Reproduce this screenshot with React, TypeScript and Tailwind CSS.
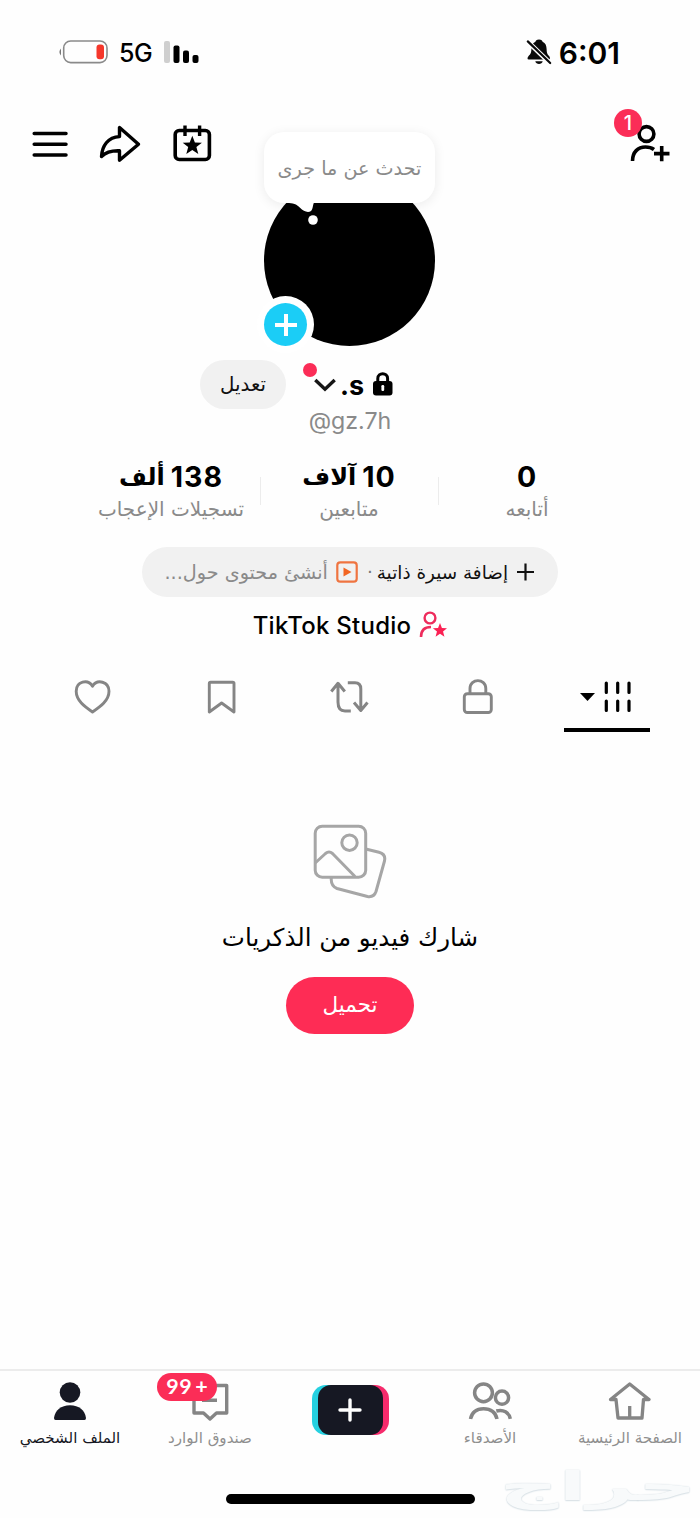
import type { ReactNode } from "react";

const AR = "font-['DejaVu_Sans',sans-serif]";

const STAR =
  "M0 -10 L2.6 -3.3 L9.6 -3 L4.1 1.4 L6 8.3 L0 4.4 L-6 8.3 L-4.1 1.4 L-9.6 -3 L-2.6 -3.3 Z";

function StatusBar() {
  return (
    <div className="flex h-[104px] items-center justify-between pl-[58px] pr-[80px]">
      <div className="flex items-center">
        <svg width="50" height="24" viewBox="0 0 50 24" className="block">
          <path d="M3 8.4 Q-0.2 12 3 15.6 Z" fill="#777" />
          <rect x="5.7" y="1" width="43.3" height="21.6" rx="7" fill="none" stroke="#8a8a8a" strokeWidth="1.6" />
          <rect x="38.5" y="4.6" width="7.5" height="14.6" rx="3" fill="#f5372b" />
        </svg>
        <span className="ml-[11px] pt-[3px] font-['Inter',sans-serif] text-[25px] leading-none font-medium tracking-[-0.5px]">5G</span>
        <svg width="38" height="24" viewBox="0 0 38 24" className="ml-[11px] block">
          <rect x="1" y="1" width="6" height="22" rx="2" fill="#cfcfcf" />
          <rect x="10.5" y="5.5" width="6" height="17.5" rx="2" fill="#000" />
          <rect x="20" y="10.5" width="6" height="12.5" rx="2" fill="#000" />
          <rect x="29.5" y="15" width="6" height="8" rx="2" fill="#000" />
        </svg>
      </div>
      <div className="flex items-center">
        <svg width="26" height="28" viewBox="0 0 26 28" className="block">
          <path d="M13 1.5 C10.5 1.5 9.7 3 9.4 3.8 C6.5 5 5.5 7.8 5.4 11 C5.3 15 4.5 16 2.6 18 C1.2 19.5 1 21.5 2.8 21.5 H22.4 C24.5 21.5 24.3 19.5 23 18 C21.3 16 20.7 15 20.6 11 C20.5 7.8 19.5 5 16.6 3.8 C16.3 3 15.5 1.5 13 1.5 Z" fill="#0a0a0a" />
          <path d="M9.3 23.3 H16.7 C16 27 10 27 9.3 23.3 Z" fill="#0a0a0a" />
          <path d="M1 3 L25 26" stroke="#fff" strokeWidth="4.8" />
          <path d="M1.8 3.4 L24.2 25" stroke="#0a0a0a" strokeWidth="2.2" strokeLinecap="round" />
        </svg>
        <span className="ml-[7px] pt-[2px] font-['Inter',sans-serif] text-[30px] leading-none font-semibold">6:01</span>
      </div>
    </div>
  );
}

function HeaderIcons() {
  return (
    <div className="flex w-[180px] items-center justify-between pt-[20px]">
      <svg width="36" height="40" viewBox="0 0 36 40" fill="none" stroke="#000" strokeWidth="3.5" strokeLinecap="round">
        <path d="M2.2 9.5 H34 M2.2 20.3 H34 M2.2 31 H34" />
      </svg>
      <svg width="42" height="40" viewBox="0 0 42 40" fill="none" stroke="#000" strokeWidth="3.4" strokeLinejoin="round">
        <path d="M20.5 3.5 V12.6 C9 13 3 22 2.5 32.5 C7.5 27.5 13 26.5 20.5 26.8 V36.3 L39.5 20.2 Z" />
      </svg>
      <svg width="40" height="40" viewBox="0 0 40 40">
        <rect x="3.2" y="6.5" width="34.2" height="29" rx="4" fill="none" stroke="#000" strokeWidth="3.6" />
        <path d="M13 1.5 V12 M27.6 1.5 V12" stroke="#000" strokeWidth="3.4" />
        <path d={STAR} transform="translate(20.3 21.7)" fill="#000" />
      </svg>
    </div>
  );
}

function Avatar() {
  return (
    <div className="relative mt-[71px] h-[171px] w-[171px] rounded-full bg-black">
      <div
        dir="rtl"
        className={`absolute -top-[43px] left-0 flex h-[71px] w-[171px] items-center justify-center rounded-[20px] bg-white pt-[3px] whitespace-nowrap shadow-[0_2px_12px_rgba(0,0,0,0.08)] ${AR} text-[19.2px] text-[#8a8a8a]`}
      >
        تحدث عن ما جرى
      </div>
      <svg width="40" height="26" viewBox="0 0 40 26" className="absolute top-[27px] left-[23px]">
        <path d="M0 0 H27.5 C25.5 2 26.5 6.5 24 9 C21 11 16.5 9.5 13 5.8 C9.5 2 6 1 0 1 Z" fill="#fff" />
        <circle cx="26" cy="18" r="4.8" fill="#fff" />
      </svg>
      <div className="absolute top-[121px] -left-[7px] flex size-[57px] items-center justify-center rounded-full bg-white">
        <div className="flex size-[43px] items-center justify-center rounded-full bg-[#1bcdf6]">
          <svg width="24" height="24" viewBox="0 0 24 24" stroke="#fff" strokeWidth="4">
            <path d="M12 1 V23 M1 12 H23" />
          </svg>
        </div>
      </div>
    </div>
  );
}

function AddFriend() {
  return (
    <div className="flex w-[181px] justify-end">
      <div className="relative mr-[-3px] mt-[20px]">
        <svg width="42" height="40" viewBox="0 0 42 40" fill="none" stroke="#000" strokeWidth="3.6">
          <circle cx="17.5" cy="10" r="7.4" />
          <path d="M3.5 37 C3.5 28 9 23 16.5 23 C20 23 23 24 25 25.5 M25 29.6 H40.5 M32.7 22 V37.3" />
        </svg>
        <span className="absolute -top-[15px] -left-[15px] flex size-[28px] items-center justify-center rounded-full bg-[#fb2d57] font-['Inter',sans-serif] text-[20px] leading-none font-medium text-white">
          1
        </span>
      </div>
    </div>
  );
}

function NameRow() {
  return (
    <div className="mt-[13px] flex h-[50px] items-center pl-[200px]">
      <button dir="rtl" className={`h-[49px] w-[86px] rounded-full bg-[#f1f1f1] pt-px text-[19.8px] ${AR} text-[#111]`}>
        تعديل
      </button>
      <div className="relative ml-[27px] flex items-center pt-px">
        <span className="absolute -top-[7px] -left-[10px] size-[14px] rounded-full bg-[#fb2d57]" />
        <svg width="24" height="16" viewBox="0 0 24 16" fill="none" stroke="#161616" strokeWidth="3.4">
          <path d="M2.3 3 L12 12.2 L21.7 3" />
        </svg>
        <span className="ml-[3px] pt-px font-['Inter',sans-serif] text-[27px] leading-none font-bold">.s</span>
        <svg width="22" height="26" viewBox="0 0 22 26" className="-mt-[2px] ml-[8px] block">
          <rect x="1" y="10" width="19.5" height="14.5" rx="3" fill="#000" />
          <path d="M5.8 12 V7.5 C5.8 1.2 15.6 1.2 15.6 7.5 V12" fill="none" stroke="#000" strokeWidth="3" />
          <rect x="9.4" y="14" width="2.8" height="6" rx="1.2" fill="#fff" />
        </svg>
      </div>
    </div>
  );
}

const stats = [
  { num: "138", unit: "ألف", label: "تسجيلات الإعجاب" },
  { num: "10", unit: "آلاف", label: "متابعين" },
  { num: "0", unit: "", label: "أتابعه" },
];

function Stats() {
  return (
    <div className="mt-[23px] flex justify-center pr-[2px]">
      {stats.map((s, i) => (
        <div key={s.label} className="flex items-center">
          {i > 0 && <div className="h-[28px] w-px bg-[#ececec]" />}
          <div dir="rtl" className="flex w-[177px] flex-col items-center">
            <div className="flex h-[32px] items-center gap-[6px] font-['Inter',sans-serif] text-[28.5px] leading-none font-bold whitespace-nowrap">
              <span className="tracking-[1px]">{s.num}</span>
              {s.unit && <span className={`${AR} text-[24px]`}>{s.unit}</span>}
            </div>
            <div className={`flex h-[28px] items-center pt-[3px] text-[20px] whitespace-nowrap text-[#8a8a8a] ${AR}`}>{s.label}</div>
          </div>
        </div>
      ))}
    </div>
  );
}

function BioPill() {
  return (
    <div
      dir="rtl"
      className={`mx-auto mt-[26px] flex h-[50px] w-[416px] items-center rounded-full bg-[#f1f1f1] pr-[24px] text-[18.4px] whitespace-nowrap ${AR}`}
    >
      <svg width="17" height="18" viewBox="0 0 17 18" stroke="#111" strokeWidth="2.2">
        <path d="M8.5 0.5 V17.5 M0 9 H17" />
      </svg>
      <span className="mr-[9px] pt-[2px] text-[#111]">إضافة سيرة ذاتية</span>
      <span className="mr-[4px] text-[#777]">·</span>
      <svg width="22" height="22" viewBox="0 0 22 22" className="mr-[9px]">
        <rect x="1.3" y="1.3" width="19.4" height="19.4" rx="3" fill="none" stroke="#ef7440" strokeWidth="2.2" />
        <path d="M7.5 6.5 L15.5 11 L7.5 15.5 Z" fill="#f26522" />
      </svg>
      <span className="mr-[8px] pt-[2px] text-[19.2px] text-[#8a8a8a]">أنشئ محتوى حول...</span>
    </div>
  );
}

function StudioLink() {
  return (
    <div className="mt-[12px] flex h-[32px] items-center justify-center">
      <span className="pt-px font-['Inter',sans-serif] text-[24px] leading-none font-medium tracking-[0.25px]">TikTok Studio</span>
      <svg width="28" height="28" viewBox="0 0 28 28" className="ml-[8px] block">
        <circle cx="11" cy="7" r="5.4" fill="none" stroke="#ee2c5c" strokeWidth="2.4" />
        <path d="M2 26 C2 19.5 5.5 16 12 16" fill="none" stroke="#ee2c5c" strokeWidth="2.6" />
        <path d={STAR} transform="translate(21 19.5) scale(.74)" fill="#fb2053" />
      </svg>
    </div>
  );
}

function TabIcon({ children }: { children: ReactNode }) {
  return (
    <div className="flex h-full flex-1 items-center justify-center">
      <svg width="40" height="40" viewBox="0 0 40 40" fill="none" stroke="#858585" strokeWidth="2.9" strokeLinejoin="round">
        {children}
      </svg>
    </div>
  );
}

function Tabs() {
  return (
    <div className="mt-[20px] flex h-[71px] pr-[29px] pl-[28px]">
      <TabIcon>
        <path d="M20.5 35 C12.5 29.5 4.2 23.5 4.2 14.3 C4.2 4.3 15.8 1.8 20.5 9.2 C25.2 1.8 37 4.3 37 14.3 C37 23.5 28.5 29.5 20.5 35 Z" />
      </TabIcon>
      <TabIcon>
        <path d="M8.3 6.5 Q8.3 5.2 9.6 5.2 H31.7 Q33 5.2 33 6.5 V35 L20.6 26 L8.3 35 Z" />
      </TabIcon>
      <TabIcon>
        <path d="M2.3 14.5 L9 6.3 L15.8 14.5 M9 7 V25 Q9 34 16 34 H21.8 M18.8 5.8 H26 Q31.8 5.8 31.8 12 V33 M25 25.5 L31.8 33.5 L38.5 25.5" strokeWidth="3" />
      </TabIcon>
      <TabIcon>
        <rect x="6.3" y="16.7" width="27" height="18.8" rx="3" />
        <path d="M12 16.5 V11.5 C12 1 27.8 1 27.8 11.5 V16.5" />
      </TabIcon>
      <div className="flex h-full flex-1 flex-col items-center">
        <div className="flex flex-1 items-center pt-[5px]">
          <svg width="54" height="36" viewBox="0 0 54 36">
            <path d="M0 14 H15 L7.5 22 Z" fill="#000" />
            <path d="M26.3 4 V13.5 M37.7 4 V13.5 M49 4 V13.5 M26.3 22 V31.5 M37.7 22 V31.5 M49 22 V31.5" stroke="#000" strokeWidth="3.2" strokeLinecap="round" />
          </svg>
        </div>
        <div className="h-[4px] w-[86px] bg-black" />
      </div>
    </div>
  );
}

function EmptyState() {
  return (
    <div className="flex flex-1 flex-col items-center pt-[92px]">
      <svg width="74" height="76" viewBox="0 0 74 76" fill="none" stroke="#a6a6a6" strokeWidth="3" strokeLinejoin="round">
        <rect x="2.2" y="2.2" width="50.5" height="51" rx="7" />
        <circle cx="36.5" cy="18.7" r="7.7" />
        <path d="M2.2 39 L12.5 29.5 Q16 26.5 19.5 29.5 L42 52.5" />
        <path d="M52.7 25 L66 28.2 Q73 30 71.5 37 L63 67.5 Q61 73.5 54.5 72.5 L24 64.5 Q17.5 62 18.3 53.5" />
      </svg>
      <div dir="rtl" className={`mt-[16px] flex h-[44px] items-center text-[24.5px] whitespace-nowrap text-black ${AR}`}>
        شارك فيديو من الذكريات
      </div>
      <button dir="rtl" className={`mt-[17px] h-[57px] w-[128px] rounded-full bg-[#fe2c55] text-[21.5px] text-white ${AR}`}>
        تحميل
      </button>
    </div>
  );
}

function NavItem({ label, active, children }: { label: string; active?: boolean; children: ReactNode }) {
  return (
    <div className="flex w-[140px] flex-col items-center pt-[11px]">
      <div className="relative h-[43px]">{children}</div>
      <div
        dir="rtl"
        className={`flex h-[27px] items-center text-[15.1px] whitespace-nowrap ${AR} ${active ? "text-[#161823]" : "text-[#8f8f8f]"}`}
      >
        {label}
      </div>
    </div>
  );
}

function BottomNav() {
  return (
    <div className="flex h-[116px] shrink-0 border-t-2 border-[#ececec]">
      <NavItem label="الملف الشخصي" active>
        <svg width="44" height="44" viewBox="0 0 44 44" fill="#161823">
          <circle cx="22" cy="10.5" r="10.3" />
          <path d="M6 36 C7 28 13 23.2 22 23.2 C31 23.2 37 28 38 36 Q38 38 36.5 38 H7.5 Q6 38 6 36 Z" />
        </svg>
      </NavItem>
      <NavItem label="صندوق الوارد">
        <svg width="44" height="44" viewBox="0 0 44 44" fill="none" stroke="#858585" strokeWidth="3.4" strokeLinejoin="round">
          <path d="M6 3.5 H38.7 V31 H28.5 L22 37 L15.5 31 H6 Z M14 18.3 H29" />
        </svg>
        <span className="absolute -top-[9px] -left-[31px] flex h-[28px] w-[60px] items-center justify-center gap-[3px] rounded-full bg-[#fb2d57] pb-px font-['Lato',sans-serif] text-[21.5px] leading-none font-bold text-white">
          <span className="tracking-[0.5px]">99</span>
          <span>+</span>
        </span>
      </NavItem>
      <div className="flex w-[140px] justify-center pt-[14px]">
        <div className="flex h-[50px] w-[77px] items-center justify-center rounded-[14px] bg-[linear-gradient(90deg,#25d0e0_50%,#f62b6c_50%)]">
          <div className="flex h-[50px] w-[65px] items-center justify-center rounded-[13px] bg-[#161823]">
            <svg width="24" height="24" viewBox="0 0 24 24" stroke="#fff" strokeWidth="3.4" strokeLinecap="round">
              <path d="M12 2 V22 M2 12 H22" />
            </svg>
          </div>
        </div>
      </div>
      <NavItem label="الأصدقاء">
        <svg width="44" height="44" viewBox="0 0 44 44" fill="none" stroke="#858585" strokeWidth="3.5">
          <circle cx="15.5" cy="10.8" r="8.9" />
          <circle cx="34" cy="15.7" r="6.6" />
          <path d="M2.5 37 C4 30 9 26.8 15.5 26.8 C22 26.8 27.5 30 29 37 M28.3 29 C35.5 27 41 30.5 42.3 36.8" />
        </svg>
      </NavItem>
      <NavItem label="الصفحة الرئيسية">
        <svg width="44" height="44" viewBox="0 0 44 44" fill="none" stroke="#858585" strokeWidth="3.3" strokeLinejoin="round">
          <path d="M8 17.5 H2.5 L21.7 2 L41 17.5 H35.5 L34 36 H10 Z M21.7 24 V36" />
        </svg>
      </NavItem>
    </div>
  );
}

export default function App() {
  return (
    <div className="relative flex h-[1518px] w-[700px] flex-col overflow-hidden bg-[#fefefe] text-black">
      <StatusBar />
      <div className="flex items-start justify-between px-[32px]">
        <HeaderIcons />
        <Avatar />
        <AddFriend />
      </div>
      <NameRow />
      <div className="flex h-[29px] items-center justify-center pb-[3px] font-['Inter',sans-serif] text-[23.2px] leading-none text-[#8a8a8a]">
        @gz.7h
      </div>
      <Stats />
      <BioPill />
      <StudioLink />
      <Tabs />
      <EmptyState />
      <BottomNav />
      <div className="flex h-[33px] shrink-0 justify-center pt-[9px]">
        <div className="h-[10px] w-[249px] rounded-full bg-black" />
      </div>
      <div
        dir="rtl"
        className={`absolute top-[1456px] left-[503px] flex h-[60px] w-[190px] items-center justify-center whitespace-nowrap ${AR} text-[40px] leading-none font-bold text-[#f8fafb] [text-shadow:0_0_1px_#cfd9df,0_1px_1px_#d9e2e7]`}
      >
        <span className="scale-x-[2.05]">حراج</span>
      </div>
    </div>
  );
}
